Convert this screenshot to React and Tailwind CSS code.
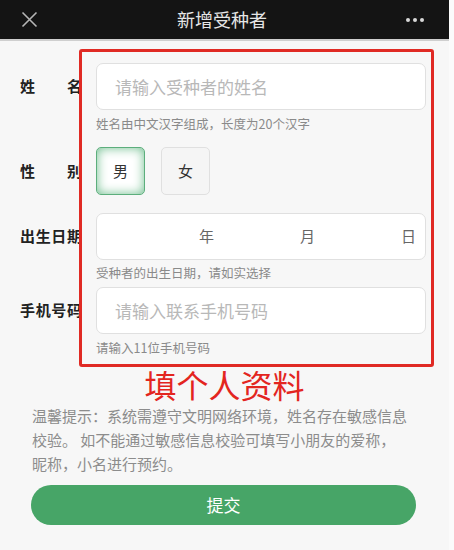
import React, { useState } from 'react';

const FONT = { fontFamily: '"Noto Sans CJK SC", "Noto Sans", sans-serif' };

const Label = ({ chars }) => (
  <div className="w-[76px] shrink-0 pl-[20px]">
    <div className="flex w-[62px] justify-between text-[15px] font-bold text-[#222]">
      {chars.map((c, i) => (
        <span key={i}>{c}</span>
      ))}
    </div>
  </div>
);

const Hint = ({ children, className = '' }) => (
  <div className={`pl-[96px] text-[12.5px] leading-[14px] text-[#8a8a8a] ${className}`}>{children}</div>
);

const App = () => {
  const [gender, setGender] = useState('male');

  return (
    <div className="flex h-[550px] w-[454px] overflow-hidden bg-[#f7f7f7]" style={FONT}>
      <div className="flex w-[449px] flex-col">
        {/* Top bar */}
        <div className="flex h-[39px] items-center justify-between bg-[#141414] px-[20px]">
          <svg width="17" height="17" viewBox="0 0 17 17" className="ml-[1px]">
            <path d="M1.5 1.5 L15.5 15.5 M15.5 1.5 L1.5 15.5" stroke="#b5b5b5" strokeWidth="1.6" fill="none" />
          </svg>
          <div className="text-[18px] text-[#e6e6e6]">新增受种者</div>
          <div className="flex gap-[3px] pr-[5px]">
            <span className="h-[4px] w-[4px] rounded-full bg-[#d8d8d8]" />
            <span className="h-[4px] w-[4px] rounded-full bg-[#d8d8d8]" />
            <span className="h-[4px] w-[4px] rounded-full bg-[#d8d8d8]" />
          </div>
        </div>
        <div className="h-[2px] bg-[#cfcfcf]" />

        {/* Form */}
        <div className="relative pt-[22px]">
          <div className="flex items-center">
            <Label chars={['姓', '名']} />
            <div className="ml-[20px] flex h-[47px] w-[330px] items-center rounded-[7px] border border-[#e0e0e0] bg-white pl-[18px] text-[17px] text-[#b8b8b8]">
              请输入受种者的姓名
            </div>
          </div>
          <Hint className="mt-[7px]">姓名由中文汉字组成，长度为20个汉字</Hint>

          <div className="mt-[16px] flex items-center">
            <Label chars={['性', '别']} />
            <div className="ml-[20px] flex gap-[16px]">
              <button
                onClick={() => setGender('male')}
                className={`h-[48px] w-[49px] rounded-[5px] text-[15px] text-[#333] ${
                  gender === 'male'
                    ? 'border border-[#5cae7c] bg-white shadow-[inset_0_0_11px_#6dbd8c]'
                    : 'border border-[#e0e0e0] bg-[#f5f5f5]'
                }`}
              >
                男
              </button>
              <button
                onClick={() => setGender('female')}
                className={`h-[48px] w-[49px] rounded-[5px] text-[15px] text-[#333] ${
                  gender === 'female'
                    ? 'border border-[#5cae7c] bg-white shadow-[inset_0_0_11px_#6dbd8c]'
                    : 'border border-[#e0e0e0] bg-[#f5f5f5]'
                }`}
              >
                女
              </button>
            </div>
          </div>

          <div className="mt-[18px] flex items-center">
            <Label chars={['出', '生', '日', '期']} />
            <div className="ml-[20px] flex h-[47px] w-[330px] items-center gap-[86px] rounded-[7px] border border-[#e0e0e0] bg-white pl-[102px] text-[15px] text-[#666]">
              <span>年</span>
              <span>月</span>
              <span>日</span>
            </div>
          </div>
          <Hint className="mt-[6px]">受种者的出生日期，请如实选择</Hint>

          <div className="mt-[7px] flex items-center">
            <Label chars={['手', '机', '号', '码']} />
            <div className="ml-[20px] flex h-[47px] w-[330px] items-center rounded-[7px] border border-[#e0e0e0] bg-white pl-[18px] text-[17px] text-[#b8b8b8]">
              请输入联系手机号码
            </div>
          </div>
          <Hint className="mt-[7px]">请输入11位手机号码</Hint>

          {/* annotation box */}
          <div className="pointer-events-none absolute left-[79px] top-[8px] h-[318px] w-[355px] rounded-[3px] border-[3px] border-[#e02a24]" />
        </div>

        <div className="mt-[13px] text-center text-[32px] leading-[32px] text-[#e3251f]">填个人资料</div>

        <div className="mt-[4px] px-[32px] text-[15px] leading-[24px] text-[#8c8c8c]">
          温馨提示：系统需遵守文明网络环境，姓名存在敏感信息
          <br />
          校验。 如不能通过敏感信息校验可填写小朋友的爱称，
          <br />
          昵称，小名进行预约。
        </div>

        <div className="mt-[9px] pl-[31px]">
          <button className="h-[40px] w-[385px] rounded-full bg-[#47a567] text-[17px] text-white">提交</button>
        </div>
      </div>
      <div className="flex-1 bg-[#fbfbfb]" />
    </div>
  );
};

export default App;
